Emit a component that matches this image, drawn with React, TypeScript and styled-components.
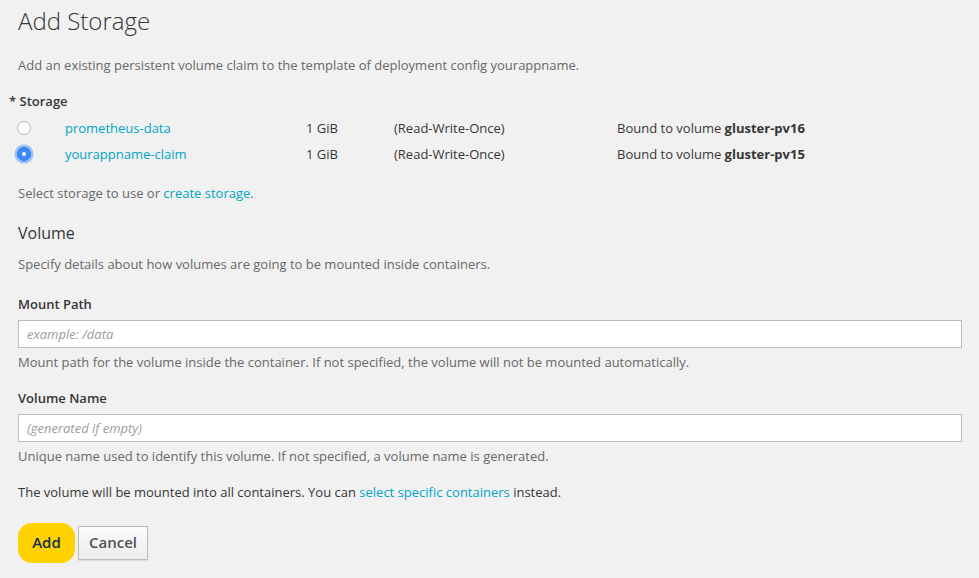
import React from "react";
import styled, { createGlobalStyle } from "styled-components";

const Global = createGlobalStyle`
  html, body { margin: 0; padding: 0; background: #f1f1f1; }
  body { font-family: "Open Sans", "Liberation Sans", sans-serif; color: #363636; font-size: 13px; }
`;

const Page = styled.div`
  padding: 6px 17px 0 18px;
  display: flex;
  flex-direction: column;
`;

const Title = styled.h1`
  margin: 0;
  font-size: 24px;
  font-weight: 300;
  line-height: 30px;
  color: #363636;
`;

const Text = styled.p<{ $gap?: number; $muted?: boolean }>`
  margin: ${(p) => p.$gap ?? 0}px 0 0;
  font-size: 13px;
  line-height: 20px;
  color: ${(p) => (p.$muted ? "#686868" : "#363636")};
`;

const Label = styled.div<{ $gap: number }>`
  margin-top: ${(p) => p.$gap}px;
  font-size: 13px;
  font-weight: 600;
  line-height: 20px;
  color: #363636;
`;

const RequiredLabel = styled(Label)`
  margin-left: -9px;
`;

const Link = styled.a`
  color: #00a5c4;
  text-decoration: none;
`;

const Rows = styled.div`
  margin-top: 4px;
  margin-left: -1px;
  display: flex;
  flex-direction: column;
`;

const Row = styled.div`
  display: grid;
  grid-template-columns: 48px 241px 88px 223px auto;
  align-items: center;
  height: 26px;
  line-height: 20px;
`;

const Radio = styled.span<{ $checked?: boolean }>`
  box-sizing: border-box;
  width: 14px;
  height: 14px;
  border-radius: 50%;
  display: flex;
  align-items: center;
  justify-content: center;
  background: ${(p) => (p.$checked ? "#3b8af7" : "#fff")};
  border: 1px solid ${(p) => (p.$checked ? "#2d7de8" : "#b4b4b4")};
  box-shadow: ${(p) => (p.$checked ? "0 0 0 2.5px rgba(80,150,250,0.55)" : "none")};
  &::after {
    content: "";
    width: 4px;
    height: 4px;
    border-radius: 50%;
    background: ${(p) => (p.$checked ? "#fff" : "transparent")};
  }
`;

const Cell = styled.span``;

const Bold = styled.b`
  font-weight: 700;
`;

const Heading = styled.h2`
  margin: 19px 0 0;
  font-size: 16px;
  font-weight: 400;
  line-height: 22px;
  color: #363636;
`;

const Input = styled.input`
  box-sizing: border-box;
  margin-top: 6px;
  width: 100%;
  height: 28px;
  border: 1px solid #bbbbbb;
  background: #fff;
  padding: 0 8px;
  font-family: "Open Sans", "Liberation Sans", sans-serif;
  font-size: 13px;
  color: #363636;
  outline: none;
  &::placeholder {
    font-style: italic;
    color: #9c9c9c;
  }
`;

const Buttons = styled.div`
  margin-top: 21px;
  display: flex;
  align-items: center;
  gap: 3px;
`;

const AddButton = styled.button`
  width: 57px;
  height: 40px;
  border: none;
  border-radius: 14px;
  background: #ffd200;
  color: #15324e;
  font-family: "Open Sans", "Liberation Sans", sans-serif;
  font-size: 15px;
  font-weight: 600;
  padding: 0 0 2px;
`;

const CancelButton = styled.button`
  box-sizing: border-box;
  width: 70px;
  height: 34px;
  border: 1px solid #bbbbbb;
  background: linear-gradient(#fafafa, #ededed);
  box-shadow: 0 1px 1px rgba(0, 0, 0, 0.08);
  color: #4d5258;
  font-family: "Open Sans", "Liberation Sans", sans-serif;
  font-size: 15px;
  font-weight: 600;
  padding: 0 0 2px;
`;

const claims = [
  { name: "prometheus-data", size: "1 GiB", mode: "(Read-Write-Once)", pv: "gluster-pv16", checked: false },
  { name: "yourappname-claim", size: "1 GiB", mode: "(Read-Write-Once)", pv: "gluster-pv15", checked: true },
];

export default function App() {
  return (
    <>
      <Global />
      <Page>
        <Title>Add Storage</Title>
        <Text $gap={19} $muted>
          Add an existing persistent volume claim to the template of deployment config yourappname.
        </Text>
        <RequiredLabel $gap={16}>* Storage</RequiredLabel>
        <Rows>
          {claims.map((c) => (
            <Row key={c.name}>
              <Radio $checked={c.checked} />
              <Link href="#">{c.name}</Link>
              <Cell>{c.size}</Cell>
              <Cell>{c.mode}</Cell>
              <Cell>
                Bound to volume <Bold>{c.pv}</Bold>
              </Cell>
            </Row>
          ))}
        </Rows>
        <Text $gap={16} $muted>
          Select storage to use or <Link href="#">create storage</Link>.
        </Text>
        <Heading>Volume</Heading>
        <Text $gap={10} $muted>
          Specify details about how volumes are going to be mounted inside containers.
        </Text>
        <Label $gap={20}>Mount Path</Label>
        <Input placeholder="example: /data" />
        <Text $gap={4} $muted>
          Mount path for the volume inside the container. If not specified, the volume will not be mounted automatically.
        </Text>
        <Label $gap={16}>Volume Name</Label>
        <Input placeholder="(generated if empty)" />
        <Text $gap={4} $muted>
          Unique name used to identify this volume. If not specified, a volume name is generated.
        </Text>
        <Text $gap={16}>
          The volume will be mounted into all containers. You can <Link href="#">select specific containers</Link> instead.
        </Text>
        <Buttons>
          <AddButton>Add</AddButton>
          <CancelButton>Cancel</CancelButton>
        </Buttons>
      </Page>
    </>
  );
}
